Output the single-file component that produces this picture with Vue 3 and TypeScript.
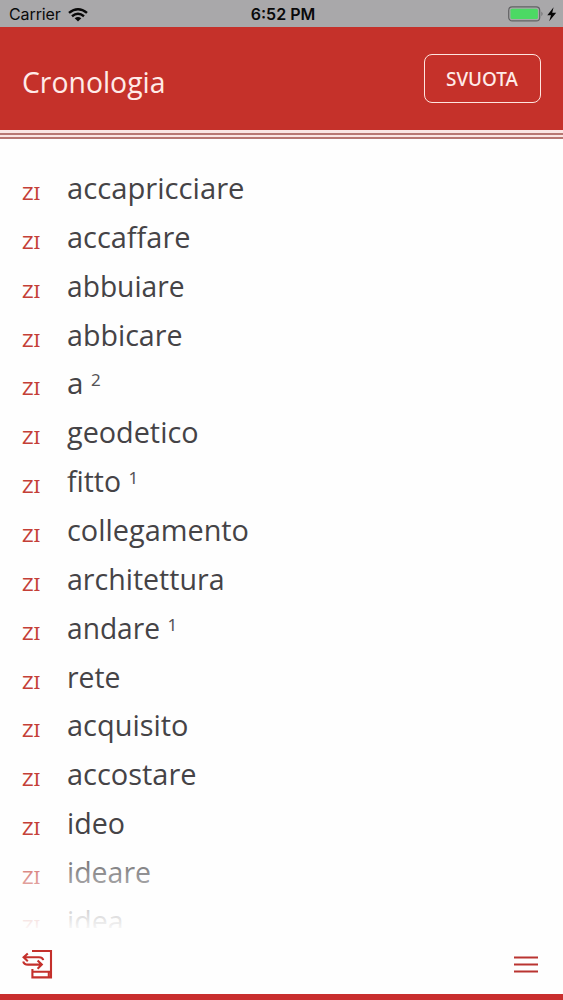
<script setup lang="ts">
interface Entry {
  word: string
  width: number
  sup?: string
}

const entries: Entry[] = [
  { word: 'accapricciare', width: 177.5 },
  { word: 'accaffare', width: 123.5 },
  { word: 'abbuiare', width: 117.5 },
  { word: 'abbicare', width: 115.5 },
  { word: 'a', width: 16.5, sup: '2' },
  { word: 'geodetico', width: 131.5 },
  { word: 'fitto', width: 54, sup: '1' },
  { word: 'collegamento', width: 182 },
  { word: 'architettura', width: 157.5 },
  { word: 'andare', width: 93, sup: '1' },
  { word: 'rete', width: 53.5 },
  { word: 'acquisito', width: 121.5 },
  { word: 'accostare', width: 129.5 },
  { word: 'ideo', width: 58 },
  { word: 'ideare', width: 84 },
  { word: 'idea', width: 56.5 },
]
</script>

<template>
  <div class="screen">
    <div class="status">
      <div class="carrier">
        <span>Carrier</span>
        <svg width="20" height="14" viewBox="0 0 20 14" fill="none" stroke="#080808" stroke-width="2.5">
          <path d="M1 4.9Q10-2.4 19 4.9" />
          <path d="M4 8.2Q10 3.4 16 8.2" />
          <path d="M10 13.6 6.7 10.3Q10 7.7 13.3 10.3Z" fill="#080808" stroke="none" />
        </svg>
      </div>
      <span class="time">6:52 PM</span>
      <svg class="battery" width="50" height="18" viewBox="0 0 50 18">
        <rect x="1.7" y="1.9" width="31" height="14" rx="3.5" fill="#a9a8aa" stroke="#626264" stroke-width="1.2" />
        <rect x="3.5" y="3.7" width="27.4" height="10.4" rx="1.6" fill="#4cd964" />
        <path d="M34.5 6.6Q36.5 8.9 34.5 11.2Z" fill="#626264" />
        <path d="M46.6 2.2 40.3 10.3H44L42.2 16.3 49.2 7.8H45.2Z" fill="#050505" />
      </svg>
    </div>

    <header class="header">
      <svg class="title" width="145" height="40">
        <text x="0" y="29.6" textLength="143.5" lengthAdjust="spacingAndGlyphs">Cronologia</text>
      </svg>
      <button class="clear">
        <svg width="74" height="24">
          <text x="0" y="19" textLength="72" lengthAdjust="spacingAndGlyphs">SVUOTA</text>
        </svg>
      </button>
    </header>
    <div class="stripes"></div>

    <main class="list">
      <div v-for="entry in entries" :key="entry.word" class="row">
        <svg class="tag" width="45" height="48">
          <text x="0" y="35.5" textLength="18.5" lengthAdjust="spacingAndGlyphs">ZI</text>
        </svg>
        <svg class="word" :width="entry.width" height="48">
          <text x="0" y="35" :textLength="entry.width" lengthAdjust="spacingAndGlyphs">{{ entry.word }}</text>
        </svg>
        <span v-if="entry.sup" class="sup">{{ entry.sup }}</span>
      </div>
      <div class="fade"></div>
    </main>

    <footer class="toolbar">
      <svg width="32" height="32" viewBox="0 0 32 32" fill="none" stroke="#c4302b" stroke-width="2.1">
        <path d="M10 2H29V28.4H10.4V20" />
        <path d="M10.4 22.8H29M26.8 23V28" />
        <path d="M5.8 4.4 1.6 8.3 5.8 12.2M1.8 8.2H17Q20.8 8.2 21.2 11.2" />
        <path d="M15.6 11.4 19.8 15.6 15.6 19.7M19.5 15.6H6Q2 15.6 1.2 12.4" />
      </svg>
      <svg width="26" height="20" viewBox="0 0 26 20" stroke="#b93431" stroke-width="2">
        <path d="M1 2.5H25M1 9.5H25M1 16.5H25" />
      </svg>
    </footer>
    <div class="bottom"></div>
  </div>
</template>

<style>
body {
  background: #fefefe;
}
</style>

<style scoped>
.screen {
  width: 563px;
  height: 1000px;
  display: flex;
  flex-direction: column;
  overflow: hidden;
  background: #fefefe;
  font-family: "Open Sans", "Noto Sans", sans-serif;
}
svg {
  display: block;
  overflow: visible;
  flex: none;
}
.status {
  height: 27px;
  flex: none;
  box-sizing: border-box;
  padding: 0 6px 0 9px;
  display: grid;
  grid-template-columns: 1fr auto 1fr;
  align-items: center;
  background: #a9a8aa;
  color: #0a0a0a;
  font-family: Inter, Roboto, sans-serif;
  font-size: 16px;
  line-height: 27px;
}
.carrier {
  display: flex;
  align-items: center;
  gap: 7px;
  padding-top: 1px;
  letter-spacing: -0.1px;
}
.time {
  font-weight: 600;
  padding-top: 1px;
}
.battery {
  justify-self: end;
}
.header {
  height: 103px;
  flex: none;
  box-sizing: border-box;
  padding: 0 22px;
  display: flex;
  align-items: center;
  justify-content: space-between;
  background: #c5312a;
}
.title {
  margin-top: 8px;
}
.title text {
  font-size: 29.5px;
  fill: #ffebe8;
}
.clear {
  width: 117px;
  height: 49px;
  padding: 0;
  display: flex;
  align-items: center;
  justify-content: center;
  background: transparent;
  border: 1.5px solid #ffe5df;
  border-radius: 8px;
}
.clear text {
  font-family: "Noto Sans", sans-serif;
  font-size: 19px;
  font-weight: 500;
  fill: #ffebe8;
}
.stripes {
  height: 9px;
  flex: none;
  background: linear-gradient(#fbe5e3 0 3px, #b87772 3px 5px, #fbe5e3 5px 7px, #b87772 7px 9px);
}
.list {
  position: relative;
  height: 789px;
  flex: none;
  box-sizing: border-box;
  padding: 25px 22px 0;
  overflow: hidden;
}
.row {
  height: 48.87px;
  display: flex;
  align-items: flex-start;
}
.tag text {
  font-family: "Noto Sans", sans-serif;
  font-size: 18.8px;
  fill: #c43f37;
}
.word text {
  font-size: 29.5px;
  fill: #454346;
}
.sup {
  margin: 11px 0 0 7.5px;
  font-family: "Noto Sans", sans-serif;
  font-size: 17px;
  line-height: 20px;
  color: #555356;
}
.fade {
  position: absolute;
  left: 0;
  right: 0;
  bottom: 0;
  height: 96px;
  background: linear-gradient(rgba(254, 254, 254, 0), rgba(254, 254, 254, 0.95));
}
.toolbar {
  flex: 1;
  padding: 7px 24px 0 22px;
  display: flex;
  align-items: center;
  justify-content: space-between;
}
.bottom {
  height: 6px;
  flex: none;
  background: #c92e2e;
}
</style>
